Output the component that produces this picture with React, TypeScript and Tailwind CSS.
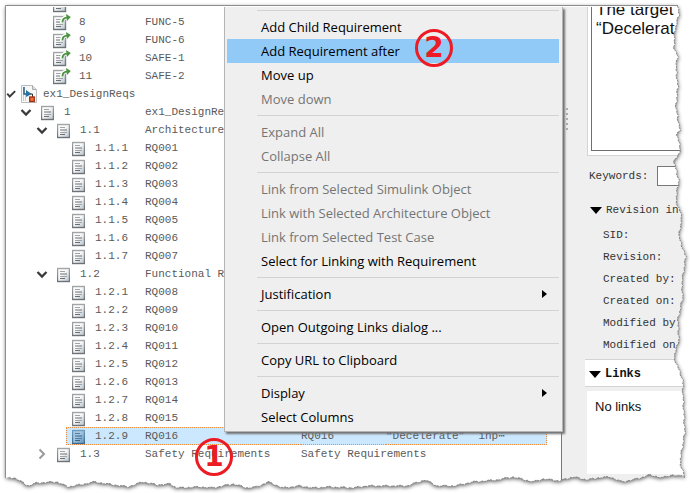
import React from "react";

type Row = {
  index: string;
  id: string;
  depth: "linked" | "set" | "one" | "two" | "three";
  toggle?: "open" | "closed";
  summary?: string;
  description?: string;
  selected?: boolean;
};

const rows: Row[] = [
  { index: "7", id: "FUNC-4", depth: "linked" },
  { index: "8", id: "FUNC-5", depth: "linked" },
  { index: "9", id: "FUNC-6", depth: "linked" },
  { index: "10", id: "SAFE-1", depth: "linked" },
  { index: "11", id: "SAFE-2", depth: "linked" },
  { index: "ex1_DesignReqs", id: "", depth: "set", toggle: "open" },
  { index: "1", id: "ex1_DesignReqs", depth: "one", toggle: "open" },
  { index: "1.1", id: "Architecture", depth: "two", toggle: "open" },
  { index: "1.1.1", id: "RQ001", depth: "three" },
  { index: "1.1.2", id: "RQ002", depth: "three" },
  { index: "1.1.3", id: "RQ003", depth: "three" },
  { index: "1.1.4", id: "RQ004", depth: "three" },
  { index: "1.1.5", id: "RQ005", depth: "three" },
  { index: "1.1.6", id: "RQ006", depth: "three" },
  { index: "1.1.7", id: "RQ007", depth: "three" },
  { index: "1.2", id: "Functional R", depth: "two", toggle: "open" },
  { index: "1.2.1", id: "RQ008", depth: "three" },
  { index: "1.2.2", id: "RQ009", depth: "three" },
  { index: "1.2.3", id: "RQ010", depth: "three" },
  { index: "1.2.4", id: "RQ011", depth: "three" },
  { index: "1.2.5", id: "RQ012", depth: "three" },
  { index: "1.2.6", id: "RQ013", depth: "three" },
  { index: "1.2.7", id: "RQ014", depth: "three" },
  { index: "1.2.8", id: "RQ015", depth: "three" },
  { index: "1.2.9", id: "RQ016", depth: "three", summary: "RQ016", description: "“Decelerate”  inp⋯", selected: true },
  { index: "1.3", id: "Safety Requirements", depth: "two", toggle: "closed", summary: "Safety Requirements" },
];

const indent = {
  linked: "pl-[27px]",
  set: "pl-0",
  one: "pl-[14px]",
  two: "pl-[30px]",
  three: "pl-[46px]",
};

function DocIcon({ linked, selected }: { linked?: boolean; selected?: boolean }) {
  return (
    <svg className={linked ? "h-[17px] w-[18px] shrink-0" : "h-[17px] w-[13px] shrink-0"} viewBox={linked ? "0 0 18 17" : "0 0 13 17"} aria-hidden="true">
      <defs>
        <linearGradient id={selected ? "docSel" : "docBg"} x1="0" y1="0" x2="1" y2="1">
          <stop offset="0.4" stopColor={selected ? "#a4c8e4" : "#fbfbfb"} />
          <stop offset="1" stopColor={selected ? "#5f93bb" : "#b4c2cc"} />
        </linearGradient>
        <linearGradient id={selected ? "rimSel" : "rimBg"} x1="0" y1="0" x2="0" y2="1">
          <stop offset="0" stopColor={selected ? "#6f9cbd" : "#a2a5a7"} />
          <stop offset="1" stopColor={selected ? "#3f6a8b" : "#6c7276"} />
        </linearGradient>
      </defs>
      <rect x="0.5" y="2.5" width="12" height="13" fill={selected ? "url(#docSel)" : "url(#docBg)"} stroke={selected ? "url(#rimSel)" : "url(#rimBg)"} strokeWidth="1.400" />
      <path d="M3 5.500H8M3 10.500H10" stroke={selected ? "#54809f" : "#a0a4a7"} />
      <path d="M3 8H10M3 12.500H8" stroke={selected ? "#3c647f" : "#6c7074"} />
      {linked && (
        <>
          <path d="M9 9C9 5 10.500 3.500 14 3.500" fill="none" stroke="#fff" strokeWidth="4" />
          <path d="M9.500 8.500C9.500 5.200 11 3.600 14 3.600" fill="none" stroke="#4a9440" strokeWidth="1.900" />
          <path d="M13 0L17.800 3L14 7Z" fill="#4a9440" />
        </>
      )}
    </svg>
  );
}

function ModelIcon() {
  return (
    <svg className="h-[18px] w-4 shrink-0" viewBox="0 0 16 18" aria-hidden="true">
      <path d="M0.500 0.500H11.500L15.500 4.500V17.500H0.500Z" fill="#f7f7f7" stroke="#b9bdc0" />
      <path d="M11.500 0.500V4.500H15.500" fill="#ddd" stroke="#aaa" />
      <path d="M2.500 2V16M4.500 9V16" stroke="#c9ced2" />
      <path d="M3 2V9H6" fill="none" stroke="#255f8c" strokeWidth="1.500" />
      <path d="M5 5L10.500 9L5 12Z" fill="#28709f" />
      <path d="M9 9H11.500V13" fill="none" stroke="#333" />
      <rect x="8.700" y="12" width="4.600" height="4.500" fill="#e8743c" stroke="#a62c16" strokeWidth="1.300" />
    </svg>
  );
}

function Toggle({ state, small }: { state: "open" | "closed"; small?: boolean }) {
  return (
    <button type="button" aria-label={state === "open" ? "Collapse" : "Expand"} className={small ? "w-[15px] shrink-0" : "w-[21px] shrink-0"}>
      <svg className={small ? "h-2.5 w-[10px]" : "h-3 w-3"} viewBox="0 0 12 12" fill="none" aria-hidden="true">
        {state === "closed" ? (
          <path d="M3.500 1.500L8 6L3.500 10.500" stroke="#9a9a9a" strokeWidth="2" />
        ) : (
          <path d={small ? "M1.500 5.500L4.500 9L11 2.500" : "M1.500 4L6 8.500L10.500 4"} stroke="#3a3a3a" strokeWidth="2.300" />
        )}
      </svg>
    </button>
  );
}

function TreeRow({ row }: { row: Row }) {
  const mark = row.selected ? "border-y border-dotted border-[#ee8a3c] bg-[#cce8ff]" : "";
  const line = row.selected ? "leading-4" : "leading-[18px]";
  const set = row.depth === "set";
  return (
    <tr className="h-[18px]" aria-selected={row.selected ? true : undefined}>
      <td className="p-0" colSpan={set ? 4 : 1}>
        <div className={`flex h-[18px] items-center ${indent[row.depth]}`}>
          {row.toggle && <Toggle state={row.toggle} small={set} />}
          {!row.toggle && !row.selected && <span className="w-5 shrink-0" />}
          {row.selected && <span className="w-[14px] shrink-0" />}
          <div className={`flex h-[18px] min-w-0 flex-1 items-center ${row.selected ? "border-l pl-[5px]" : ""} ${mark}`}>
            {set ? <ModelIcon /> : <DocIcon linked={row.depth === "linked"} selected={row.selected} />}
            <span className={set ? "pl-1.5" : row.depth === "linked" ? "pl-2" : "pl-2.5"}>{row.index}</span>
          </div>
        </div>
      </td>
      {!set && (
        <>
          <td className="p-0"><div className={`h-[18px] ${line} ${mark}`}>{row.id}</div></td>
          <td className="p-0"><div className={`h-[18px] ${line} ${mark}`}>{row.summary}</div></td>
          <td className="p-0">
            <div className={`h-[18px] whitespace-pre ${line} ${mark} ${row.selected ? "border-r" : ""}`}>{row.description}</div>
          </td>
        </>
      )}
    </tr>
  );
}

type Entry = { label: string; off?: boolean; sub?: boolean; active?: boolean } | null;

const entries: Entry[] = [
  null,
  { label: "Add Child Requirement" },
  { label: "Add Requirement after", active: true },
  { label: "Move up" },
  { label: "Move down", off: true },
  null,
  { label: "Expand All", off: true },
  { label: "Collapse All", off: true },
  null,
  { label: "Link from Selected Simulink Object", off: true },
  { label: "Link with Selected Architecture Object", off: true },
  { label: "Link from Selected Test Case", off: true },
  { label: "Select for Linking with Requirement" },
  null,
  { label: "Justification", sub: true },
  null,
  { label: "Open Outgoing Links dialog ..." },
  null,
  { label: "Copy URL to Clipboard" },
  null,
  { label: "Display", sub: true },
  { label: "Select Columns" },
];

function Badge({ value, place }: { value: string; place: string }) {
  return (
    <span className={`absolute flex size-[38px] items-center justify-center rounded-full border-[3px] border-[#ed1c24] font-['DejaVu_Sans',sans-serif] text-[28px] leading-none font-bold text-[#ed1c24] ${place}`}>
      {value}
    </span>
  );
}

function ContextMenu() {
  return (
    <div role="menu" className="absolute top-0 left-[218px] w-[339px] border-r border-b border-l border-[#b4b4b4] bg-[#efefef] pr-[3px] pb-0.5 pl-0.5 font-['Open_Sans','Noto_Sans',sans-serif] text-[13px] shadow-[2px_2px_2px_#707070]">
      {entries.map((e, i) =>
        e === null ? (
          <div key={i} role="separator" className={i === 0 ? "ml-[30px] h-2 pt-[3px]" : "ml-[30px] h-[9px] pt-1"}>
            <div className="h-px bg-[#d2d2d2]" />
          </div>
        ) : (
          <button
            key={i}
            type="button"
            role="menuitem"
            disabled={e.off}
            className={`relative flex h-6 w-full items-center justify-between pr-3 pl-[34px] text-left leading-6 whitespace-nowrap ${e.active ? "bg-[#91c9f7]" : ""} ${e.off ? "text-[#757575]" : "text-black"}`}
          >
            {e.label}
            {e.sub && (
              <svg className="h-2 w-[5px]" viewBox="0 0 5 8" aria-hidden="true">
                <path d="M0 0L5 4L0 8Z" fill="#000" />
              </svg>
            )}
            {e.active && <Badge value="2" place="top-[-10px] left-[188px]" />}
          </button>
        )
      )}
    </div>
  );
}

function Down() {
  return (
    <svg className="h-[7px] w-3 shrink-0" viewBox="0 0 12 7" aria-hidden="true">
      <path d="M0 0H12L6 7Z" fill="#000" />
    </svg>
  );
}

const revision = ["SID:", "Revision:", "Created by:", "Created on:", "Modified by:", "Modified on:"];

function Details() {
  return (
    <aside className="flex min-w-0 flex-1 overflow-hidden bg-[#efefef] font-['Liberation_Mono',monospace] text-[11px] text-[#333]">
      <div className="flex w-[23px] shrink-0 flex-col items-start gap-[3px] pt-[101px] pl-1">
        {[0, 1, 2, 3, 4].map((n) => (
          <span key={n} className="size-0.5 rounded-full bg-[#999]" />
        ))}
      </div>
      <div className="min-w-0 flex-1">
        <div className="ml-0.5 flow-root h-[149px] border-b border-l border-[#d4d4d4] bg-white pl-[3px]">
          <textarea
            aria-label="Description"
            readOnly
            className="-mt-[7px] block h-[151px] w-full resize-none overflow-hidden border-b border-l border-[#6f6f6f] bg-white pl-1 font-['Liberation_Sans',sans-serif] text-[17px] leading-[19px] text-[#111] outline-none"
            value={"The target\n“Decelerat"}
          />
        </div>
        <div className="flex h-10 items-center pl-1">
          <label htmlFor="keywords" className="w-[68px] shrink-0">Keywords:</label>
          <input id="keywords" className="h-5 min-w-0 flex-1 border border-[#777] bg-white" />
        </div>
        <button type="button" className="flex h-7 items-center gap-1 pl-[5px] whitespace-nowrap">
          <Down />
          <span>Revision in</span>
        </button>
        <div className="pl-[18px] leading-[22px] whitespace-nowrap">
          {revision.map((r) => (
            <div key={r}>{r}</div>
          ))}
        </div>
        <div className="mt-[3px] border-y border-[#d4d4d4] bg-white pt-0.5">
          <button type="button" className="flex h-6 items-center gap-1 pl-1 text-xs font-bold text-[#111]">
            <Down />
            <span>Links</span>
          </button>
        </div>
        <div className="mt-1 ml-0.5 h-[83px] bg-white px-2 py-2 font-['Liberation_Sans',sans-serif] text-[13px] leading-4 text-[#111]">No links</div>
      </div>
    </aside>
  );
}

const edge: [number, number][] = [
  [678, 6], [679, 15], [675, 30], [674, 47], [678, 57], [676, 67], [678, 87], [676, 107], [680, 130], [677, 135], [681, 150],
  [674, 162], [679, 180], [676, 200], [682, 217], [679, 237], [686, 257], [682, 283], [683, 297], [678, 320], [679, 340],
  [674, 357], [683, 380], [683, 393], [685, 433], [680, 462], [685, 477],
  [672, 475], [662, 478], [650, 475], [637, 479], [622, 482], [610, 477], [598, 478], [587, 480], [573, 477], [560, 481],
  [543, 479], [533, 482], [513, 477], [497, 480], [473, 482], [455, 486], [437, 486], [425, 480], [407, 486], [387, 486],
  [367, 486], [353, 488], [330, 487], [313, 488], [300, 486], [283, 488], [268, 482], [257, 487], [247, 488], [233, 484],
  [213, 488], [200, 487], [177, 488], [170, 484], [157, 485], [143, 482], [128, 487], [107, 484], [95, 482], [85, 484],
  [68, 487], [57, 482], [37, 483], [28, 486], [15, 478], [6, 478],
];

// Roughens the straight runs between the edge points so the paper looks torn.
function tear(points: [number, number][]) {
  const out: string[] = [];
  let k = 0;
  for (let i = 0; i < points.length - 1; i++) {
    const [x1, y1] = points[i];
    const [x2, y2] = points[i + 1];
    const len = Math.hypot(x2 - x1, y2 - y1);
    const steps = Math.max(1, Math.round(len / 3));
    for (let s = 0; s < steps; s++) {
      const t = s / steps;
      const off = [0.6, -0.5, 0.3, -0.8, 0.8][k++ % 5];
      const x = x1 + (x2 - x1) * t - ((y2 - y1) / len) * off;
      const y = y1 + (y2 - y1) * t + ((x2 - x1) / len) * off;
      out.push(`${x.toFixed(1)} ${y.toFixed(1)}`);
    }
  }
  return out.join("L");
}

const ragged = tear(edge);
const paper = `M6 6L${ragged}L6 478Z`;

function TornEdge() {
  return (
    <svg className="pointer-events-none absolute inset-0 h-full w-full" viewBox="0 0 690 493" preserveAspectRatio="none" aria-hidden="true">
      <defs>
        <clipPath id="outside">
          <path d={`M0 0H690V493H0Z${paper}`} clipRule="evenodd" />
        </clipPath>
        <filter id="soft" x="-5%" y="-5%" width="110%" height="110%">
          <feGaussianBlur stdDeviation="2" />
        </filter>
      </defs>
      <g clipPath="url(#outside)">
        <rect width="690" height="493" fill="#fff" />
        <path d={paper} fill="#000" fillOpacity="0.7" filter="url(#soft)" transform="translate(0 1)" />
      </g>
      <path d="M5.500 478V5.500H678" fill="none" stroke="#8c8c8c" />
      <path d={`M${ragged}`} fill="none" stroke="#888" strokeDasharray="2 1" />
    </svg>
  );
}

export default function App() {
  return (
    <main className="relative overflow-hidden bg-white pt-[7px] pr-1 pl-1.5">
      <div className="relative flex">
        <section className="w-[556px] shrink-0 overflow-hidden border-r border-[#777] pb-[30px]">
          <table className="mt-[-12px] w-[541px] table-fixed border-collapse font-['Liberation_Mono',monospace] text-[11px] whitespace-nowrap text-[#5a5a5a]">
            <colgroup>
              <col className="w-[139px]" />
              <col className="w-[156px]" />
              <col className="w-[85px]" />
              <col />
            </colgroup>
            <tbody>
              {rows.map((r) => (
                <TreeRow key={r.index} row={r} />
              ))}
            </tbody>
          </table>
        </section>
        <Details />
        <ContextMenu />
        <Badge value="1" place="top-[431px] left-[189px]" />
      </div>
      <TornEdge />
    </main>
  );
}
